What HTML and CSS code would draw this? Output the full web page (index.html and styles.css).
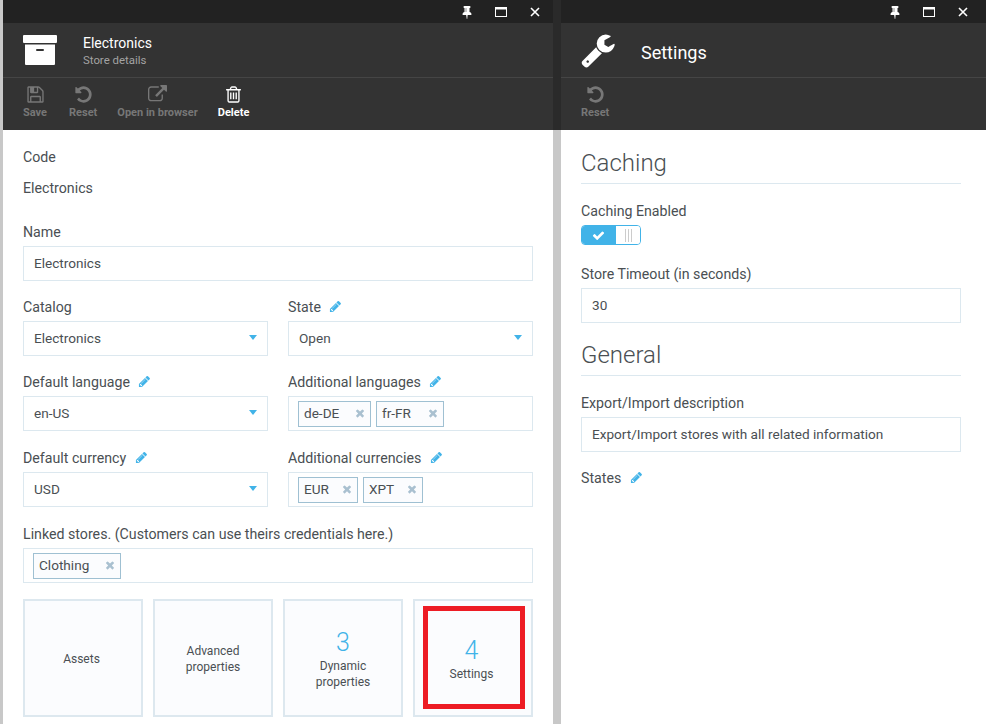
FILE: index.html
```html
<!DOCTYPE html>
<html>

<head>
  <meta charset="utf-8">
  <title>Store details</title>
  <link rel="stylesheet" href="styles.css">
</head>

<body>
  <!-- icon set -->
  <svg class="icon-defs" xmlns="http://www.w3.org/2000/svg">
    <symbol id="i-wrench" viewBox="0 0 1792 1792"><path d="M448 1472q0-26-19-45t-45-19-45 19-19 45 19 45 45 19 45-19 19-45zm644-420l-682 682q-37 37-90 37-52 0-91-37l-106-108q-38-36-38-90 0-53 38-91l681-681q39 98 114.5 173.5t173.5 114.5zm634-435q0 39-23 106-47 134-164.5 217.5t-258.5 83.5q-185 0-316.5-131.5t-131.5-316.5 131.5-316.5 316.5-131.5q58 0 121.5 16.5t107.5 46.5q16 11 16 28t-16 28l-293 169v224l193 107q5-3 79-48.5t135.5-81 70.5-35.5q15 0 23.5 10t8.5 25z"/></symbol>
    <symbol id="i-undo" viewBox="0 0 1792 1792"><path d="M1664 896q0 156-61 298t-164 245-245 164-298 61q-172 0-327-72.5t-264-204.5q-7-10-6.5-22.5t8.5-20.5l137-138q10-9 25-9 16 2 23 12 73 95 179 147t225 52q104 0 198.5-40.5t163.5-109.5 109.5-163.5 40.5-198.5-40.5-198.5-109.5-163.5-163.5-109.5-198.5-40.5q-98 0-188 35.5t-160 101.5l137 138q31 30 14 69-17 40-59 40h-448q-26 0-45-19t-19-45v-448q0-42 40-59 39-17 69 14l130 129q107-101 244.5-156.5t284.5-55.5q156 0 298 61t245 164 164 245 61 298z"/></symbol>
    <symbol id="i-link" viewBox="0 0 1792 1792"><path d="M1408 928v320q0 119-84.5 203.5t-203.5 84.5h-832q-119 0-203.5-84.5t-84.5-203.5v-832q0-119 84.5-203.5t203.5-84.5h704q14 0 23 9t9 23v64q0 14-9 23t-23 9h-704q-66 0-113 47t-47 113v832q0 66 47 113t113 47h832q66 0 113-47t47-113v-320q0-14 9-23t23-9h64q14 0 23 9t9 23zm384-864v512q0 26-19 45t-45 19-45-19l-176-176-652 652q-10 10-23 10t-23-10l-114-114q-10-10-10-23t10-23l652-652-176-176q-19-19-19-45t19-45 45-19h512q26 0 45 19t19 45z"/></symbol>
    <symbol id="i-trash" viewBox="0 0 1792 1792"><path d="M704 736v576q0 14-9 23t-23 9h-64q-14 0-23-9t-9-23v-576q0-14 9-23t23-9h64q14 0 23 9t9 23zm256 0v576q0 14-9 23t-23 9h-64q-14 0-23-9t-9-23v-576q0-14 9-23t23-9h64q14 0 23 9t9 23zm256 0v576q0 14-9 23t-23 9h-64q-14 0-23-9t-9-23v-576q0-14 9-23t23-9h64q14 0 23 9t9 23zm128 724v-948h-896v948q0 22 7 40.5t14.5 27 10.5 8.5h832q3 0 10.5-8.5t14.5-27 7-40.5zm-672-1076h448l-48-117q-7-9-17-11h-317q-10 2-17 11zm928 32v64q0 14-9 23t-23 9h-96v948q0 83-47 143.5t-113 60.5h-832q-66 0-113-58.5t-47-141.5v-952h-96q-14 0-23-9t-9-23v-64q0-14 9-23t23-9h309l70-167q15-37 54-63t79-26h320q40 0 79 26t54 63l70 167h309q14 0 23 9t9 23z"/></symbol>
    <symbol id="i-save" viewBox="0 0 1792 1792"><path d="M512 1536h768v-384h-768v384zm896 0h128v-896q0-14-10-38.5t-20-34.5l-281-281q-10-10-34-20t-39-10v416q0 40-28 68t-68 28h-576q-40 0-68-28t-28-68v-416h-128v1280h128v-416q0-40 28-68t68-28h832q40 0 68 28t28 68v416zm-384-928v-320q0-13-9.5-22.5t-22.5-9.5h-192q-13 0-22.5 9.5t-9.5 22.5v320q0 13 9.5 22.5t22.5 9.5h192q13 0 22.5-9.5t9.5-22.5zm640 32v928q0 40-28 68t-68 28h-1344q-40 0-68-28t-28-68v-1344q0-40 28-68t68-28h928q40 0 88 20t76 48l280 280q28 28 48 76t20 88z"/></symbol>
    <symbol id="i-pencil" viewBox="0 0 1792 1792"><path d="M491 1536l91-91-235-235-91 91v107h128v128h107zm523-928q0-22-22-22-10 0-17 7l-542 542q-7 7-7 17 0 22 22 22 10 0 17-7l542-542q7-7 7-17zm-54-192l416 416-832 832h-416v-416zm683 96q0 53-37 90l-166 166-416-416 166-165q36-38 90-38 53 0 91 38l235 234q37 39 37 91z"/></symbol>
    <symbol id="i-pin" viewBox="0 0 1792 1792"><path d="M800 864v-448q0-14-9-23t-23-9-23 9-9 23v448q0 14 9 23t23 9 23-9 9-23zm672 352q0 26-19 45t-45 19h-429l-51 483q-2 12-10.5 20.5t-20.5 8.5h-1q-27 0-32-27l-76-485h-404q-26 0-45-19t-19-45q0-123 78.5-221.5t177.5-98.5v-512q-52 0-90-38t-38-90 38-90 90-38h640q52 0 90 38t38 90-38 90-90 38v512q99 0 177.5 98.5t78.5 221.5z"/></symbol>
    <symbol id="i-check" viewBox="0 0 1792 1792"><path d="M1671 566q0 40-28 68l-724 724-136 136q-28 28-68 28t-68-28l-136-136-362-362q-28-28-28-68t28-68l136-136q28-28 68-28t68 28l294 295 656-657q28-28 68-28t68 28l136 136q28 28 28 68z"/></symbol>
    <symbol id="i-times" viewBox="0 0 1792 1792"><path d="M1490 1322q0 40-28 68l-136 136q-28 28-68 28t-68-28l-294-294-294 294q-28 28-68 28t-68-28l-136-136q-28-28-28-68t28-68l294-294-294-294q-28-28-28-68t28-68l136-136q28-28 68-28t68 28l294 294 294-294q28-28 68-28t68 28l136 136q28 28 28 68t-28 68l-294 294 294 294q28 28 28 68z"/></symbol>
    <symbol id="i-max" viewBox="0 0 12 10"><path d="M0 0h12v10H0zM1 2.5V9h10V2.5z" fill-rule="evenodd"/></symbol>
    <symbol id="i-close" viewBox="0 0 10 10"><path d="M1 1l8 8M9 1l-8 8" stroke="#fff" stroke-width="1.6" fill="none"/></symbol>
    <symbol id="i-box" viewBox="0 0 34 30"><path d="M0 1q0-1 1-1h32q1 0 1 1v6q0 1-1 1H1q-1 0-1-1zM2 9.500h30V29q0 1-1 1H3q-1 0-1-1zM14 14q-1 0-1 1t1 1h6q1 0 1-1t-1-1z" fill-rule="evenodd"/></symbol>
  </svg>

  <div class="workspace">
    <!-- store details blade -->
    <section class="blade blade-left">
      <div class="blade-top">
        <svg class="win-icon"><use href="#i-pin"/></svg>
        <svg class="win-icon win-max"><use href="#i-max"/></svg>
        <svg class="win-icon win-close"><use href="#i-close"/></svg>
      </div>
      <div class="blade-head">
        <svg class="head-box"><use href="#i-box"/></svg>
        <div class="head-text">
          <div class="head-title">Electronics</div>
          <div class="head-sub">Store details</div>
        </div>
      </div>
      <div class="toolbar">
        <div class="tool tool-save"><svg class="tool-icon"><use href="#i-save"/></svg>Save</div>
        <div class="tool tool-reset"><svg class="tool-icon"><use href="#i-undo"/></svg>Reset</div>
        <div class="tool tool-open"><svg class="tool-icon"><use href="#i-link"/></svg>Open in browser</div>
        <div class="tool tool-active"><svg class="tool-icon"><use href="#i-trash"/></svg>Delete</div>
      </div>
      <div class="blade-body">
        <div class="label">Code</div>
        <div class="label static-value">Electronics</div>

        <div class="group">
          <div class="label">Name</div>
          <div class="field">Electronics</div>
        </div>

        <div class="row">
          <div class="group">
            <div class="label">Catalog</div>
            <div class="field select">Electronics<span class="caret"></span></div>
          </div>
          <div class="group">
            <div class="label">State <svg class="pencil"><use href="#i-pencil"/></svg></div>
            <div class="field select">Open<span class="caret"></span></div>
          </div>
        </div>

        <div class="row row-tags">
          <div class="group">
            <div class="label">Default language <svg class="pencil"><use href="#i-pencil"/></svg></div>
            <div class="field select">en-US<span class="caret"></span></div>
          </div>
          <div class="group">
            <div class="label">Additional languages <svg class="pencil"><use href="#i-pencil"/></svg></div>
            <div class="field tags">
              <span class="tag tag-de">de-DE<svg class="tag-x"><use href="#i-times"/></svg></span>
              <span class="tag tag-fr">fr-FR<svg class="tag-x"><use href="#i-times"/></svg></span>
            </div>
          </div>
        </div>

        <div class="row row-tags">
          <div class="group">
            <div class="label">Default currency <svg class="pencil"><use href="#i-pencil"/></svg></div>
            <div class="field select">USD<span class="caret"></span></div>
          </div>
          <div class="group">
            <div class="label">Additional currencies <svg class="pencil"><use href="#i-pencil"/></svg></div>
            <div class="field tags">
              <span class="tag tag-eur">EUR<svg class="tag-x"><use href="#i-times"/></svg></span>
              <span class="tag tag-xpt">XPT<svg class="tag-x"><use href="#i-times"/></svg></span>
            </div>
          </div>
        </div>

        <div class="group">
          <div class="label">Linked stores. (Customers can use theirs credentials here.)</div>
          <div class="field tags">
            <span class="tag tag-clothing">Clothing<svg class="tag-x"><use href="#i-times"/></svg></span>
          </div>
        </div>

        <div class="tiles">
          <div class="tile tile-off">Assets</div>
          <div class="tile">Advanced<br>properties</div>
          <div class="tile"><span class="tile-num">3</span>Dynamic<br>properties</div>
          <div class="tile tile-off"><span class="tile-num">4</span>Settings<span class="marker"></span></div>
        </div>
      </div>
    </section>

    <div class="gutter"></div>

    <!-- settings blade -->
    <section class="blade blade-right">
      <div class="blade-top">
        <svg class="win-icon"><use href="#i-pin"/></svg>
        <svg class="win-icon win-max"><use href="#i-max"/></svg>
        <svg class="win-icon win-close"><use href="#i-close"/></svg>
      </div>
      <div class="blade-head">
        <svg class="head-wrench"><use href="#i-wrench"/></svg>
        <div class="head-title head-title-big">Settings</div>
      </div>
      <div class="toolbar">
        <div class="tool tool-reset-right"><svg class="tool-icon"><use href="#i-undo"/></svg>Reset</div>
      </div>
      <div class="blade-body">
        <h2 class="section-title">Caching</h2>
        <div class="label">Caching Enabled</div>
        <div class="toggle">
          <span class="toggle-on"><svg class="toggle-check"><use href="#i-check"/></svg></span>
          <span class="toggle-off"><span class="grip"></span></span>
        </div>
        <div class="group group-timeout">
          <div class="label">Store Timeout (in seconds)</div>
          <div class="field">30</div>
        </div>
        <h2 class="section-title">General</h2>
        <div class="group">
          <div class="label">Export/Import description</div>
          <div class="field">Export/Import stores with all related information</div>
        </div>
        <div class="label">States <svg class="pencil"><use href="#i-pencil"/></svg></div>
      </div>
    </section>
  </div>
</body>

</html>
```

FILE: styles.css
```css
body {
  font-family: Roboto, "Noto Sans", sans-serif;
  font-size: 14px;
  color: #4a4f53;
  background-color: #c8c8c8;
  margin: 0;
  padding: 0;
}

.icon-defs {
  display: none;
}

.workspace {
  display: flex;
  height: 724px;
  padding-left: 3px;
  overflow: hidden;
}

.blade {
  display: flex;
  flex-direction: column;
}

.blade-left {
  width: 550px;
}

.blade-right {
  width: 425px;
}

.gutter {
  width: 8px;
  height: 130px;
  background-color: #2a2a2a;
}

.blade-top {
  display: flex;
  justify-content: flex-end;
  align-items: center;
  height: 23px;
  background-color: #222;
  padding-right: 13px;
  box-sizing: border-box;
}

.blade-right .blade-top {
  padding-right: 18px;
}

.win-icon {
  width: 14px;
  height: 14px;
  fill: #fff;
  margin-left: 20px;
}

.win-max {
  width: 12px;
  height: 10px;
  margin-left: 21px;
}

.win-close {
  width: 10px;
  height: 10px;
  margin-left: 23px;
}

.blade-head {
  display: flex;
  align-items: center;
  height: 54px;
  background-color: #333;
  border-bottom: 1px solid #454545;
}

.head-box {
  width: 34px;
  height: 30px;
  fill: #fff;
  margin: 0 26px 0 20px;
}

.head-wrench {
  width: 36px;
  height: 36px;
  fill: #fff;
  margin: 0 25px 0 19px;
}

.head-text {
  padding-top: 3px;
}

.head-title {
  color: #fff;
  font-size: 14px;
  line-height: 17px;
}

.head-title-big {
  font-size: 18px;
  padding-top: 4px;
}

.head-sub {
  color: #a3a3a3;
  font-size: 11.400px;
  line-height: 17px;
}

.toolbar {
  display: flex;
  height: 52px;
  background-color: #333;
}

.tool {
  display: flex;
  flex-direction: column;
  align-items: center;
  color: #777;
  font-size: 11px;
  font-weight: 700;
  line-height: 14px;
  padding-top: 7px;
}

.tool-icon {
  width: 19px;
  height: 19px;
  fill: #777;
  margin-bottom: 2px;
}

.tool-save {
  margin-left: 20px;
}

.tool-reset {
  margin-left: 22px;
}

.tool-open {
  margin-left: 20px;
}

.tool-active {
  margin-left: 20px;
  color: #fff;
}

.tool-active .tool-icon {
  fill: #fff;
}

.tool-reset-right {
  margin-left: 20px;
}

.blade-body {
  flex: 1;
  background-color: #fff;
  padding: 17px 20px 0;
}

.blade-right .blade-body {
  padding-right: 25px;
}

.label {
  font-size: 14.200px;
  line-height: 20px;
}

.static-value {
  margin-top: 11px;
  margin-bottom: 24px;
}

.group {
  margin-bottom: 16px;
  min-width: 0;
}

.group .label {
  margin-bottom: 4px;
}

.pencil {
  width: 13px;
  height: 13px;
  fill: #41b3e8;
  margin-left: 5px;
  vertical-align: -1px;
}

.field {
  display: flex;
  align-items: center;
  position: relative;
  height: 35px;
  box-sizing: border-box;
  border: 1px solid #dce8ef;
  padding: 0 10px 2px;
  background-color: #fff;
  font-size: 13.600px;
}

.caret {
  position: absolute;
  right: 10px;
  top: 13px;
  border-left: 4.500px solid transparent;
  border-right: 4.500px solid transparent;
  border-top: 5px solid #41b3e8;
}

.row {
  display: grid;
  grid-template-columns: 245px 245px;
  column-gap: 20px;
}

.row-tags {
  margin-bottom: 1px;
}

.tags {
  padding: 0 9px;
  gap: 5px;
}

.tag {
  display: flex;
  align-items: center;
  justify-content: space-between;
  height: 26px;
  box-sizing: border-box;
  padding: 0 4px 1px 5px;
  border: 1px solid #9fc0d2;
  background-color: #fbfcfe;
}

.tag-de {
  width: 73px;
}

.tag-fr {
  width: 68px;
}

.tag-eur {
  width: 60px;
}

.tag-xpt {
  width: 60px;
}

.tag-clothing {
  width: 88px;
}

.tag-x {
  width: 12px;
  height: 12px;
  fill: #a9c0d0;
}

.tiles {
  display: flex;
  gap: 10px;
  margin-top: 15px;
}

.tile {
  display: flex;
  flex-direction: column;
  align-items: center;
  justify-content: center;
  position: relative;
  width: 120px;
  height: 118px;
  box-sizing: border-box;
  border: 2px solid #dde8ef;
  background-color: #fbfcfe;
  padding-top: 2px;
  font-size: 12px;
  line-height: 16px;
  text-align: center;
}

.tile-off {
  padding-right: 3px;
}

.tile-num {
  color: #41b3e8;
  font-size: 25px;
  font-weight: 300;
  line-height: 30px;
}

.marker {
  position: absolute;
  left: 8px;
  top: 5px;
  width: 102px;
  height: 103px;
  box-sizing: border-box;
  border: 5px solid #ed1c24;
}

.section-title {
  margin: 0 0 17px;
  height: 37px;
  box-sizing: border-box;
  border-bottom: 1px solid #dce8ef;
  font-size: 24px;
  font-weight: 300;
  line-height: 32px;
  color: #4a4f53;
}

.toggle {
  display: flex;
  width: 60px;
  height: 20px;
  box-sizing: border-box;
  margin-top: 4px;
  border: 1px solid #41b3e8;
  border-radius: 4px;
  overflow: hidden;
}

.toggle-on {
  display: flex;
  align-items: center;
  justify-content: center;
  width: 34px;
  padding-right: 2px;
  box-sizing: border-box;
  background-color: #41b3e8;
}

.toggle-check {
  width: 13px;
  height: 13px;
  fill: #fff;
}

.toggle-off {
  display: flex;
  align-items: center;
  justify-content: center;
  flex: 1;
  background-color: #fff;
}

.grip {
  width: 7px;
  height: 13px;
  background: repeating-linear-gradient(90deg, #ccc 0, #ccc 1px, #fff 1px, #fff 3px);
}

.group-timeout {
  margin-top: 19px;
}
```
